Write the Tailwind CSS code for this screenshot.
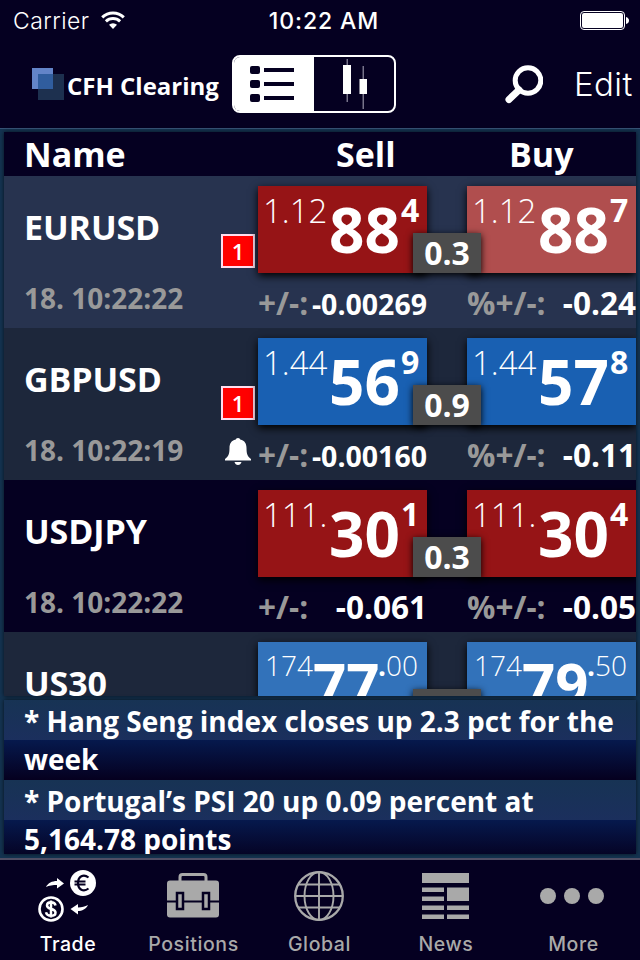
<!DOCTYPE html>
<html lang="en">

<head>
    <meta charset="UTF-8">
    <meta name="viewport" content="width=device-width, initial-scale=1.0">
    <title>CFH Clearing</title>
    <script src="https://cdn.jsdelivr.net/npm/@tailwindcss/browser@4"></script>
</head>

<body class="w-[640px] h-[960px] overflow-hidden bg-[#050021] text-white flex flex-col font-['Open_Sans',sans-serif] whitespace-nowrap">
    <!-- status bar -->
    <div class="h-10 shrink-0 grid grid-cols-3 items-center pl-[13px] pr-[11px] font-['Inter',sans-serif] leading-none">
        <div class="flex items-center gap-[11px]">
            <span class="text-[23px] font-light tracking-[0.45px] pt-0.5">Carrier</span>
            <svg class="w-6 h-[18px]" viewBox="0 0 24 18" fill="#fff">
                <path d="M12 18L8 13.8a6 6 0 0 1 8 0z" />
                <path d="M4.9 10.4a10.3 10.3 0 0 1 14.2 0M1.2 6.4a15.6 15.6 0 0 1 21.6 0" fill="none" stroke="#fff" stroke-width="3" />
            </svg>
        </div>
        <span class="text-center text-[23px] font-medium tracking-[0.9px] pl-1.5 pt-0.5">10:22 AM</span>
        <svg class="w-[49px] h-[19px] justify-self-end" viewBox="0 0 49 19">
            <rect x=".5" y=".5" width="44" height="18" rx="3.5" fill="none" stroke="#fff" />
            <rect x="2" y="2" width="41" height="15" rx="2" fill="#fff" />
            <path d="M46 6q3 1 3 3.500t-3 3.500z" fill="#fff" />
        </svg>
    </div>

    <!-- nav bar -->
    <header class="h-[88px] shrink-0 flex items-center pl-8">
        <svg class="w-8 h-8 shrink-0" viewBox="0 0 32 32">
            <rect width="21" height="21" fill="#6384c8" />
            <rect x="6" y="6" width="26" height="26" fill="#1d304f" />
            <rect x="6" y="6" width="15" height="15" fill="#305d9e" />
        </svg>
        <h1 class="ml-[3px] w-[162px] shrink-0 text-2xl font-bold pt-[3px]">CFH Clearing</h1>
        <div class="ml-[3px] w-[164px] h-[58px] shrink-0 rounded-[8px] border-2 border-white flex overflow-hidden">
            <div class="w-20 bg-white flex items-center justify-center pr-1">
                <svg class="w-11 h-9" viewBox="0 0 44 36" fill="#050021">
                    <rect width="10" height="8" rx="2" />
                    <rect y="14" width="10" height="8" rx="2" />
                    <rect y="28" width="10" height="8" rx="2" />
                    <path d="M14 2h30v4H14zM14 16h30v4H14zM14 30h30v4H14z" />
                </svg>
            </div>
            <div class="flex-1 flex items-center justify-center pl-0.5">
                <svg class="w-6 h-[50px]" viewBox="0 0 24 50" fill="#fff">
                    <path d="M3.500 0h1.500v43H3.500zM19.500 7h1.500v43h-1.500z" fill="#77738a" />
                    <rect y="6" width="8" height="29" />
                    <rect x="16.500" y="20" width="7.500" height="15" />
                </svg>
            </div>
        </div>
        <svg class="ml-[108px] w-[39px] h-[39px] shrink-0" viewBox="0 0 39 39" fill="none" stroke="#fff">
            <circle cx="24" cy="15.500" r="12.800" stroke-width="5" />
            <path d="M15 25L5 34.500" stroke-width="7" stroke-linecap="round" />
        </svg>
        <span class="ml-[31px] font-['Inter',sans-serif] font-light text-[33px] tracking-[0.4px] pt-0.5">Edit</span>
    </header>

    <main class="h-[730px] shrink-0 bg-[#143351] border-t border-[#365275] pt-[3px] px-1">
        <!-- quotes -->
        <section class="h-[564px] overflow-hidden shadow-[0_0_4px_#000a]">
            <div class="h-11 bg-[#050021] flex items-center text-[34px] font-bold leading-none">
                <span class="w-[332px] pl-[20px]">Name</span>
                <span class="w-[173px]">Sell</span>
                <span>Buy</span>
            </div>

            <article class="h-[152px] bg-[#27334f] flex">
                <div class="w-[254px] pl-[20px] pt-[34px] pr-[3px]">
                    <h2 class="text-[34px] tracking-[-0.1px] font-bold leading-[34px] h-[24px]">EURUSD</h2>
                    <div class="ml-auto w-[34px] h-[34px] bg-[#f00] border-2 border-[#fde] font-semibold text-[22px] leading-[30px] text-center">1</div>
                    <p class="text-[28px] font-bold leading-7 text-[#999] mt-4">18. 10:22:22</p>
                </div>
                <div class="w-[378px] pt-[10px] relative">
                    <div class="flex gap-10 leading-none">
                        <div class="w-[169px] h-[87px] bg-[#961416] pl-[5px] flex shadow-[0_3px_8px_#000]">
                            <span class="mt-2 w-[66px] text-[33px] font-light">1.12</span>
                            <span class="mt-3 w-[72px] text-[62px] font-bold">88</span>
                            <span class="mt-2 text-[32px] font-bold">4</span>
                        </div>
                        <div class="w-[169px] h-[87px] bg-[#b04e4e] pl-[5px] flex shadow-[0_3px_8px_#000]">
                            <span class="mt-2 w-[66px] text-[33px] font-light">1.12</span>
                            <span class="mt-3 w-[72px] text-[62px] font-bold">88</span>
                            <span class="mt-2 text-[32px] font-bold">7</span>
                        </div>
                    </div>
                    <span class="absolute left-[155px] top-[57px] w-[68px] h-10 bg-[#4c4c4c] text-center text-[32px] font-bold leading-10 shadow-[0_2px_7px_#000]">0.3</span>
                    <div class="flex gap-10 mt-[14px] leading-8 font-bold text-[31.500px] text-[#999]">
                        <p class="w-[169px] flex justify-between items-baseline">+/-:<span class="text-[28.500px] text-white">-0.00269</span></p>
                        <p class="w-[169px] flex justify-between items-baseline">%+/-:<span class="text-white">-0.24</span></p>
                    </div>
                </div>
            </article>

            <article class="h-[152px] bg-[#1d273b] flex">
                <div class="w-[254px] pl-[20px] pt-[34px] pr-[3px]">
                    <h2 class="text-[34px] tracking-[-0.1px] font-bold leading-[34px] h-[24px]">GBPUSD</h2>
                    <div class="ml-auto w-[34px] h-[34px] bg-[#f00] border-2 border-[#fde] font-semibold text-[22px] leading-[30px] text-center">1</div>
                    <div class="flex justify-between mt-4">
                        <p class="text-[28px] font-bold leading-7 text-[#999]">18. 10:22:19</p>
                        <svg class="w-[26px] h-[27px] mr-1 mt-0.5" viewBox="0 0 26 27" fill="#fff">
                            <path d="M13 0c1.500 0 2 .8 2.200 1.500C20 2.500 21.500 6 21.500 10c0 6 1 8.500 4.500 11v1.500H0V21c3.500-2.500 4.500-5 4.500-11 0-4 1.500-7.500 6.300-8.500C11 .8 11.500 0 13 0zM9.500 24h7c-.5 2-1.800 3-3.500 3s-3-1-3.500-3z" />
                        </svg>
                    </div>
                </div>
                <div class="w-[378px] pt-[10px] relative">
                    <div class="flex gap-10 leading-none">
                        <div class="w-[169px] h-[87px] bg-[#1960b2] pl-[5px] flex shadow-[0_3px_8px_#000]">
                            <span class="mt-2 w-[66px] text-[33px] font-light">1.44</span>
                            <span class="mt-3 w-[72px] text-[62px] font-bold">56</span>
                            <span class="mt-2 text-[32px] font-bold">9</span>
                        </div>
                        <div class="w-[169px] h-[87px] bg-[#1960b2] pl-[5px] flex shadow-[0_3px_8px_#000]">
                            <span class="mt-2 w-[66px] text-[33px] font-light">1.44</span>
                            <span class="mt-3 w-[72px] text-[62px] font-bold">57</span>
                            <span class="mt-2 text-[32px] font-bold">8</span>
                        </div>
                    </div>
                    <span class="absolute left-[155px] top-[57px] w-[68px] h-10 bg-[#4c4c4c] text-center text-[32px] font-bold leading-10 shadow-[0_2px_7px_#000]">0.9</span>
                    <div class="flex gap-10 mt-[14px] leading-8 font-bold text-[31.500px] text-[#999]">
                        <p class="w-[169px] flex justify-between items-baseline">+/-:<span class="text-[28.500px] text-white">-0.00160</span></p>
                        <p class="w-[169px] flex justify-between items-baseline">%+/-:<span class="text-white">-0.11</span></p>
                    </div>
                </div>
            </article>

            <article class="h-[152px] bg-[#050021] flex">
                <div class="w-[254px] pl-[20px] pt-[34px] pr-[3px]">
                    <h2 class="text-[34px] tracking-[-0.1px] font-bold leading-[34px] h-[58px]">USDJPY</h2>
                    <p class="text-[28px] font-bold leading-7 text-[#999] mt-4">18. 10:22:22</p>
                </div>
                <div class="w-[378px] pt-[10px] relative">
                    <div class="flex gap-10 leading-none">
                        <div class="w-[169px] h-[87px] bg-[#961416] pl-[5px] flex shadow-[0_3px_8px_#000]">
                            <span class="mt-2 w-[66px] text-[33px] font-light">111.</span>
                            <span class="mt-3 w-[72px] text-[62px] font-bold">30</span>
                            <span class="mt-2 text-[32px] font-bold">1</span>
                        </div>
                        <div class="w-[169px] h-[87px] bg-[#961416] pl-[5px] flex shadow-[0_3px_8px_#000]">
                            <span class="mt-2 w-[66px] text-[33px] font-light">111.</span>
                            <span class="mt-3 w-[72px] text-[62px] font-bold">30</span>
                            <span class="mt-2 text-[32px] font-bold">4</span>
                        </div>
                    </div>
                    <span class="absolute left-[155px] top-[57px] w-[68px] h-10 bg-[#4c4c4c] text-center text-[32px] font-bold leading-10 shadow-[0_2px_7px_#000]">0.3</span>
                    <div class="flex gap-10 mt-[14px] leading-8 font-bold text-[31.500px] text-[#999]">
                        <p class="w-[169px] flex justify-between items-baseline">+/-:<span class="text-white">-0.061</span></p>
                        <p class="w-[169px] flex justify-between items-baseline">%+/-:<span class="text-white">-0.05</span></p>
                    </div>
                </div>
            </article>

            <article class="h-[152px] bg-[#1d273b] flex">
                <div class="w-[254px] pl-[20px] pt-[34px] pr-[3px]">
                    <h2 class="text-[34px] tracking-[-0.1px] font-bold leading-[34px]">US30</h2>
                </div>
                <div class="w-[378px] pt-[10px] relative">
                    <div class="flex gap-10 leading-none">
                        <div class="w-[169px] h-[87px] bg-[#3272ba] pl-[7px] flex shadow-[0_3px_8px_#000]">
                            <span class="mt-[9px] w-[48px] text-[28px] font-light">174</span>
                            <span class="mt-3 w-[65px] text-[58px] font-bold">77</span>
                            <span class="mt-[9px] text-[28px] font-light"><span class="font-bold">.</span>00</span>
                        </div>
                        <div class="w-[169px] h-[87px] bg-[#3272ba] pl-[7px] flex shadow-[0_3px_8px_#000]">
                            <span class="mt-[9px] w-[48px] text-[28px] font-light">174</span>
                            <span class="mt-3 w-[65px] text-[58px] font-bold">79</span>
                            <span class="mt-[9px] text-[28px] font-light"><span class="font-bold">.</span>50</span>
                        </div>
                    </div>
                    <span class="absolute left-[155px] top-[57px] w-[68px] h-10 bg-[#4c4c4c] shadow-[0_2px_7px_#000]"></span>
                </div>
            </article>
        </section>

        <!-- headlines -->
        <section class="mt-1 h-[154px] overflow-hidden text-[28px] leading-[38px] font-bold shadow-[0_0_4px_#000a]">
            <p class="h-20 pl-[20px] pt-[2px] bg-[linear-gradient(#173354,#1b2f5d_50%,#06194d_50%,#05001f)]">* Hang Seng index closes up 2.3 pct for the<br>week</p>
            <p class="h-20 pl-[20px] pt-[2px] bg-[linear-gradient(#173354,#1b2f5d_50%,#06194d_50%,#05001f)]">* Portugal’s PSI 20 up 0.09 percent at<br>5,164.78 points</p>
        </section>
    </main>

    <!-- tab bar -->
    <nav class="h-[102px] shrink-0 border-t-2 border-[#504d64] grid grid-cols-[136px_115px_137px_115px_137px] font-['Inter',sans-serif] font-medium text-[19.5px] leading-6 tracking-[0.6px] text-[#a9a9a9]">
        <a class="flex flex-col items-center text-white">
            <svg class="w-[58px] h-[52px] mt-[10px] mr-[3px] mb-[10px]" viewBox="0 0 58 52">
                <circle cx="45" cy="13" r="13" fill="#fff" />
                <path d="M50.500 7.500c-5-4-10.500-1-10.500 5.500s5.500 9.500 10.500 5.500M36.500 11.500h11M36.500 14.500h11" fill="none" stroke="#050021" stroke-width="2.200" />
                <circle cx="13" cy="39" r="11.500" fill="none" stroke="#fff" stroke-width="2.600" />
                <path d="M17.500 35.500c-.5-2.500-2.500-3.200-4.500-3.200-3 0-4 1.400-4 3.100 0 4.600 8.500 2.600 8.500 7 0 2.200-2 3.400-4.500 3.400s-4.500-1.200-5-3.500M13 30.500v17" fill="none" stroke="#fff" stroke-width="2.500" />
                <path d="M8 17c2-4 6-6 11-6V8l7 5.500-7 5v-3.500c-4 0-8 .5-11 2z" fill="#fff" />
                <path d="M50 35c-2 4-6 6-10 6v3.500L32.500 39l7.500-5v3.500c4 0 7-1 10-2.500z" fill="#fff" />
            </svg>
            Trade
        </a>
        <a class="flex flex-col items-center">
            <svg class="w-[52px] h-[45px] mt-[13px] mr-px mb-[14px]" viewBox="0 0 52 45">
                <path d="M13 9V4q0-2.500 2.500-2.500h21Q39 1.500 39 4v5" fill="none" stroke="#a9a9a9" stroke-width="3" />
                <rect y="7.500" width="52" height="37" rx="3" fill="#a9a9a9" />
                <path d="M0 28.500h52" stroke="#050021" stroke-width="2.200" />
                <path d="M10 20h6v16h-6zM36 20h6v16h-6z" fill="#a9a9a9" stroke="#050021" stroke-width="2.500" />
            </svg>
            Positions
        </a>
        <a class="flex flex-col items-center">
            <svg class="w-[50px] h-[50px] mt-[11px] mr-px mb-[11px]" viewBox="0 0 50 50" fill="none" stroke="#a9a9a9" stroke-width="1.900">
                <circle cx="25" cy="25" r="23.800" stroke-width="2.300" />
                <ellipse cx="25" cy="25" rx="14.500" ry="24" />
                <path d="M25 1v48M1 25h48M4 13.500h42M4 36.500h42" />
            </svg>
            Global
        </a>
        <a class="flex flex-col items-center pl-px">
            <svg class="w-[47px] h-[46px] mt-[13px] mr-0.5 mb-[13px]" viewBox="0 0 47 46" fill="#a9a9a9">
                <path d="M0 0h47v10H0zM0 14.500h22v4.500H0zM25 14.500h22v13.500H25zM0 23.500h22v4.500H0zM0 32.500h22V37H0zM25 32.500h22V37H25zM0 41.500h22V46H0zM25 41.500h22V46H25z" />
            </svg>
            News
        </a>
        <a class="flex flex-col items-center pl-1">
            <svg class="w-16 h-4 mt-7 mr-1 mb-7" viewBox="0 0 64 16" fill="#a9a9a9">
                <circle cx="8" cy="8" r="8" />
                <circle cx="32" cy="8" r="8" />
                <circle cx="56" cy="8" r="8" />
            </svg>
            More
        </a>
    </nav>
</body>

</html>
